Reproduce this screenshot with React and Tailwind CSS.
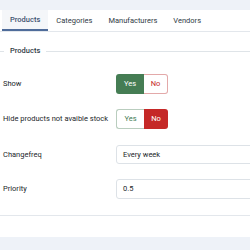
export default function App() {
  const tabs = ["Products", "Categories", "Manufacturers", "Vendors"]

  return (
    <div className="w-[250px] h-[250px] overflow-hidden bg-[#eef2f8] flex flex-col font-['Roboto','Liberation_Sans',sans-serif] text-[#22262a]">
      <div className="h-[10px] shrink-0" />

      <div className="bg-white flex flex-col h-[227px] shrink-0">
        {/* Tabs */}
        <div className="flex pl-[2px] border-b border-[#e3e7ec] h-[22px] shrink-0">
          {tabs.map((t, i) => (
            <div
              key={t}
              className={
                i === 0
                  ? "px-[8px] h-[21px] flex items-center text-[7.5px] font-medium text-[#3d5170] bg-[#f4f6f9] border-b-2 border-[#4f6c9a]"
                  : "px-[8px] h-[21px] flex items-center text-[7.5px] text-[#2f3a45]"
              }
            >
              {t}
            </div>
          ))}
        </div>

        {/* Legend */}
        <div className="flex items-center mt-[13px] h-[12px]">
          <div className="w-[4px] h-px bg-[#dfe4e8]" />
          <div className="px-[6px] text-[7.5px] font-medium leading-[12px] text-[#2f3a45]">Products</div>
          <div className="flex-1 h-px bg-[#dfe4e8]" />
        </div>

        {/* Show */}
        <div className="flex items-center mt-[17px] h-[20px]">
          <div className="w-[116px] pl-[3px] text-[7.5px]">Show</div>
          <div className="flex h-[20px] text-[7.5px]">
            <div className="w-[28px] flex items-center justify-center bg-[#457d54] text-white rounded-l-[3px]">Yes</div>
            <div className="w-[24px] flex items-center justify-center text-[#c52827] border border-l-0 border-[#e3a9a9] rounded-r-[3px]">No</div>
          </div>
        </div>

        {/* Hide */}
        <div className="flex items-center mt-[15px] h-[20px]">
          <div className="w-[116px] pl-[3px] text-[7.5px] whitespace-nowrap">Hide products not avaible stock</div>
          <div className="flex h-[20px] text-[7.5px]">
            <div className="w-[28px] flex items-center justify-center text-[#457d54] border border-r-0 border-[#b9cdbe] rounded-l-[3px]">Yes</div>
            <div className="w-[24px] flex items-center justify-center bg-[#c52827] text-white rounded-r-[3px]">No</div>
          </div>
        </div>

        {/* Changefreq */}
        <div className="flex items-center mt-[16px] h-[19px]">
          <div className="w-[116px] shrink-0 pl-[3px] text-[7.5px]">Changefreq</div>
          <div className="w-[160px] shrink-0 h-[19px] border border-[#dde2e7] rounded-[3px] flex items-center pl-[6px] text-[7.5px]">
            Every week
          </div>
        </div>

        {/* Priority */}
        <div className="flex items-center mt-[15px] h-[20px]">
          <div className="w-[116px] shrink-0 pl-[3px] text-[7.5px]">Priority</div>
          <div className="w-[160px] shrink-0 h-[20px] border border-[#dde2e7] rounded-[3px] flex items-center pl-[6px] text-[7.5px]">
            0.5
          </div>
        </div>

        <div className="mt-[16px] h-px bg-[#e3e7ec]" />
      </div>

      <div className="flex-1" />
    </div>
  )
}
